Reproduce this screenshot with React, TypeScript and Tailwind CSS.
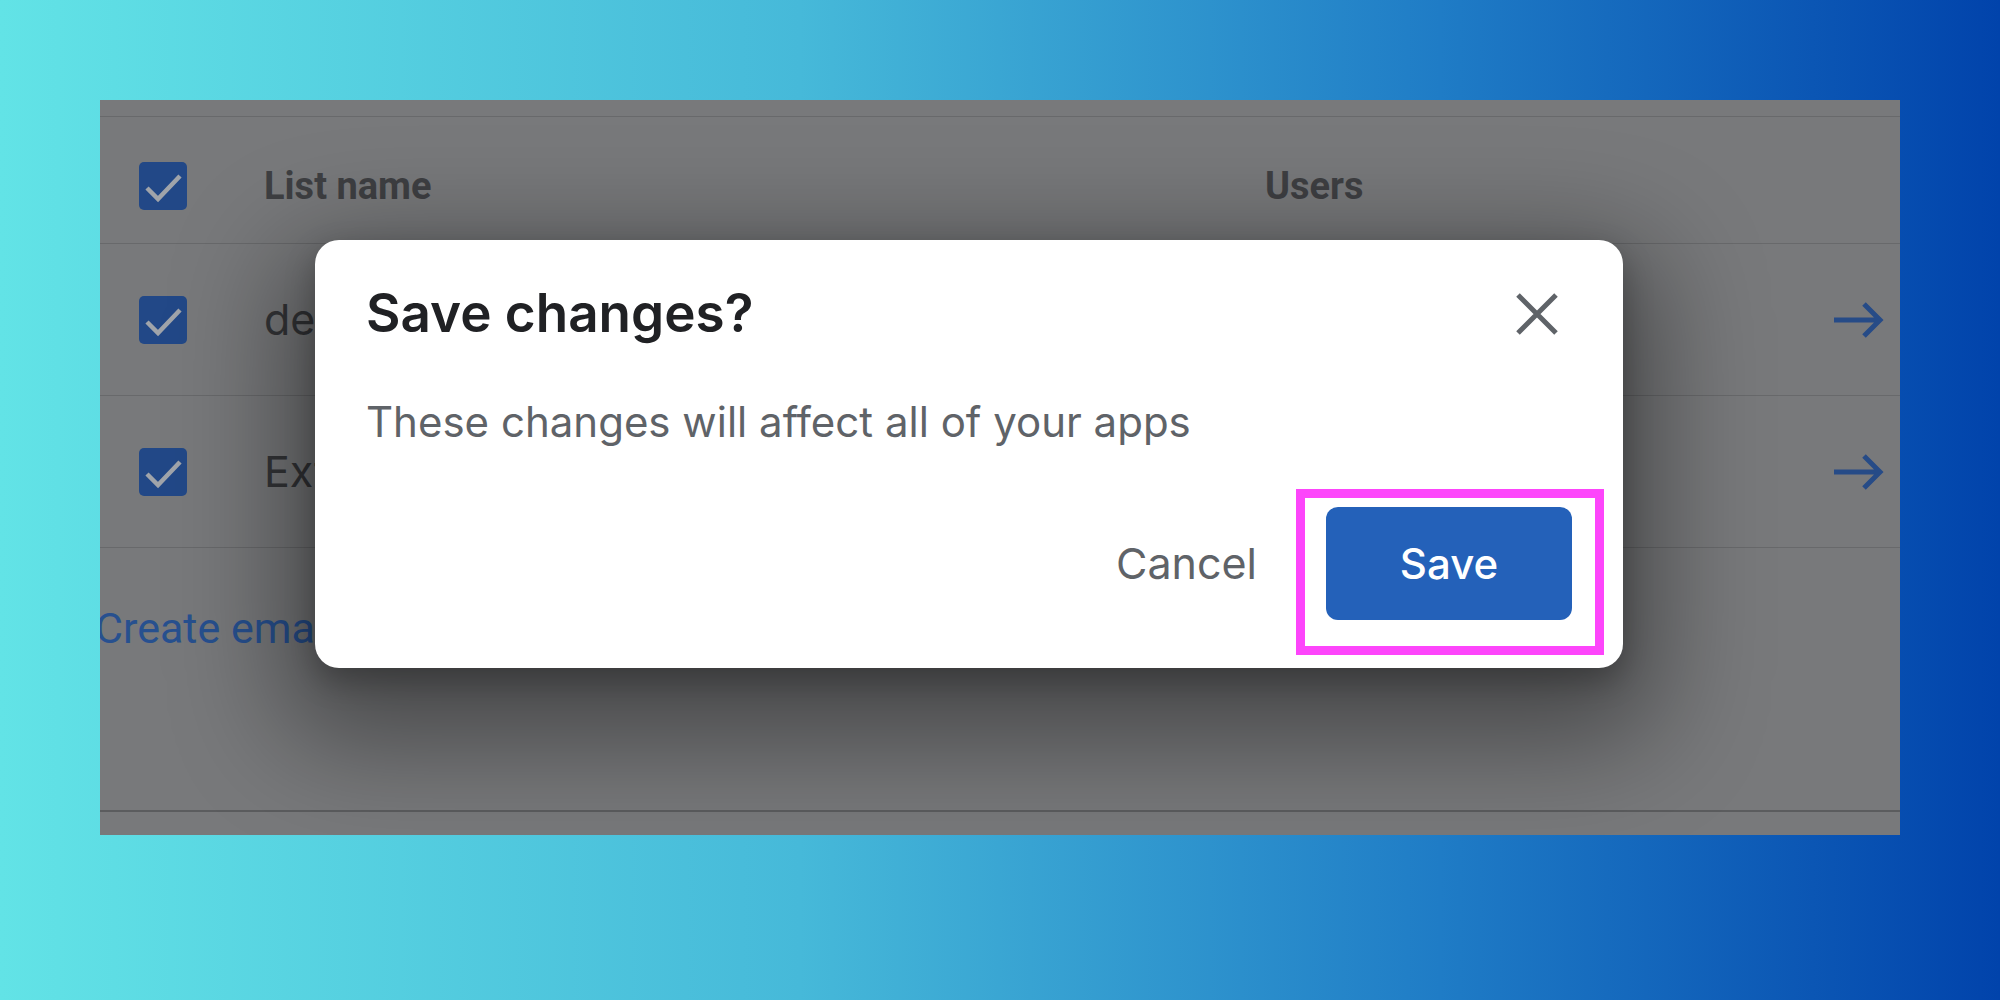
import React from "react";

function Check() {
  return (
    <div className="w-[48px] h-[48px] rounded-[5px] bg-[#224887] flex items-center justify-center shrink-0">
      <svg width="48" height="48" viewBox="0 0 48 48">
        <polyline points="8,26 19,37 41,14" fill="none" stroke="#a0a4aa" strokeWidth="4.5" />
      </svg>
    </div>
  );
}

function Arrow() {
  return (
    <svg width="50" height="38" viewBox="0 0 50 38" className="shrink-0">
      <path d="M0 19 H46 M30 3 L46 19 L30 35" fill="none" stroke="#264b87" strokeWidth="5" />
    </svg>
  );
}

function Row({ name, users }: { name: string; users: string }) {
  return (
    <div className="h-[152px] border-b border-[#68696b] flex items-center pl-[39px] pr-[16px]">
      <Check />
      <div className="ml-[77px] w-[1001px] font-['Inter',sans-serif] text-[43px] leading-none text-[#343538]">{name}</div>
      <div className="flex-1 font-['Inter',sans-serif] text-[43px] leading-none text-[#343538]">{users}</div>
      <Arrow />
    </div>
  );
}

export default function App() {
  return (
    <div className="w-[2000px] h-[1000px] overflow-hidden pt-[100px] pl-[100px] font-['Roboto','Liberation_Sans',sans-serif] bg-[linear-gradient(90deg,#62e3e6_0%,#46b9d9_40%,#1f7cc6_72%,#0143ab_100%)]">
      <div className="relative w-[1800px] h-[735px] bg-[#78797b] overflow-hidden">
        <div className="h-[16px]" />
        <div className="h-[128px] border-t border-b border-[#68696b] flex items-center pt-[11px] pl-[39px] pr-[16px]">
          <Check />
          <div className="ml-[77px] w-[1001px] text-[38px] leading-none font-bold text-[#3e3f42]">List name</div>
          <div className="flex-1 text-[38px] leading-none font-bold text-[#3e3f42]">Users</div>
        </div>
        <Row name="devs@example.com" users="12" />
        <Row name="External partners" users="4" />
        <div className="h-[264px] border-b-2 border-[#5b5c5e] pt-[59px]">
          <div className="ml-[-5px] text-[43px] leading-none text-[#27508f]">Create email list</div>
        </div>

        <div className="absolute left-[215px] top-[140px] w-[1308px] h-[428px] bg-white rounded-[24px] shadow-[0_40px_110px_34px_rgba(0,0,0,0.4),0_12px_30px_rgba(0,0,0,0.25)] px-[51px] pt-[47px] font-['Inter',sans-serif]">
          <div className="flex items-center justify-between">
            <div className="text-[53px] leading-none font-semibold text-[#202124]">Save changes?</div>
            <svg width="44" height="44" viewBox="0 0 44 44" className="mr-[13px]">
              <path d="M3 3 L41 41 M41 3 L3 41" fill="none" stroke="#5f6368" strokeWidth="5" />
            </svg>
          </div>
          <div className="mt-[61px] text-[42px] leading-none text-[#5f6368]">These changes will affect all of your apps</div>
          <div className="mt-[64px] flex items-center justify-end gap-[69px]">
            <div className="text-[43px] leading-none text-[#5f6368]">Cancel</div>
            <div className="w-[246px] h-[113px] rounded-[12px] bg-[#2461b9] flex items-center justify-center text-[42px] leading-none font-medium text-white">Save</div>
          </div>
          <div className="absolute left-[981px] top-[249px] w-[308px] h-[166px] border-[9px] border-[#fd45fb]" />
        </div>
      </div>
    </div>
  );
}
